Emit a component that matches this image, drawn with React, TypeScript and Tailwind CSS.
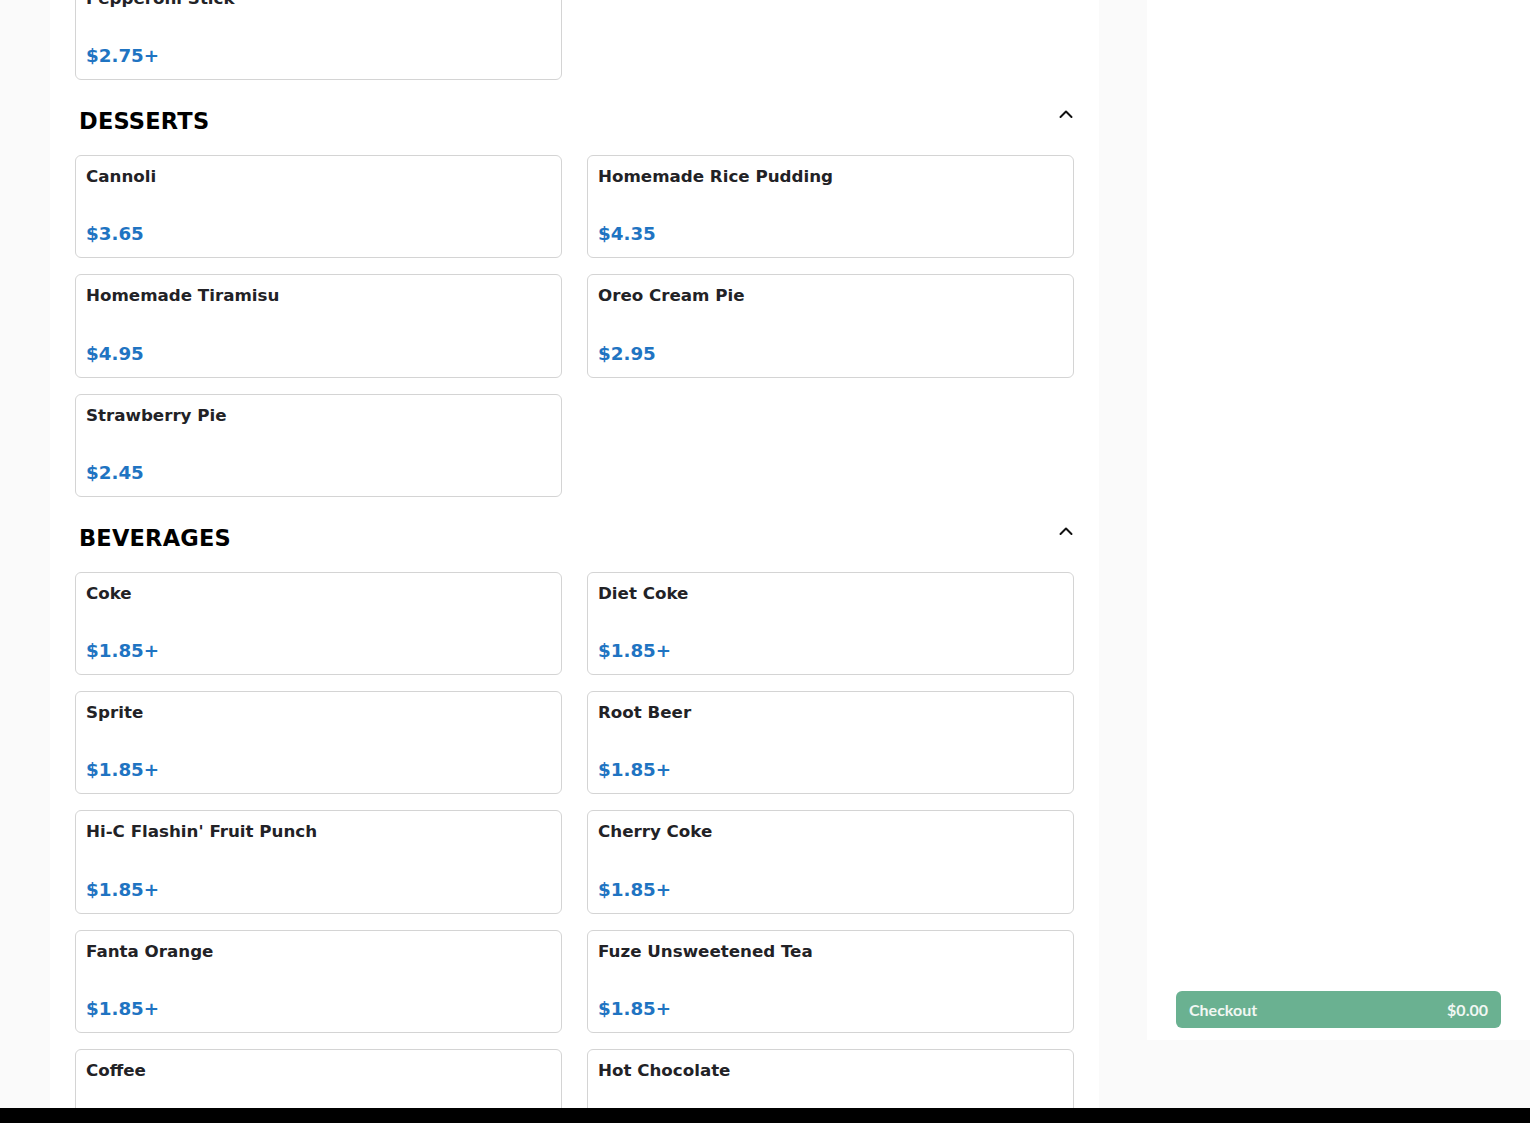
import React from "react";

type Item = { name: string; price: string };

const desserts: Item[] = [
  { name: "Cannoli", price: "$3.65" },
  { name: "Homemade Rice Pudding", price: "$4.35" },
  { name: "Homemade Tiramisu", price: "$4.95" },
  { name: "Oreo Cream Pie", price: "$2.95" },
  { name: "Strawberry Pie", price: "$2.45" },
];

const beverages: Item[] = [
  { name: "Coke", price: "$1.85+" },
  { name: "Diet Coke", price: "$1.85+" },
  { name: "Sprite", price: "$1.85+" },
  { name: "Root Beer", price: "$1.85+" },
  { name: "Hi-C Flashin' Fruit Punch", price: "$1.85+" },
  { name: "Cherry Coke", price: "$1.85+" },
  { name: "Fanta Orange", price: "$1.85+" },
  { name: "Fuze Unsweetened Tea", price: "$1.85+" },
  { name: "Coffee", price: "$1.85+" },
  { name: "Hot Chocolate", price: "$1.85+" },
];

function ItemCard({ item }: { item: Item }) {
  return (
    <button className="h-[103.3px] rounded-[6px] border border-[#d4d4d4] bg-white px-[10px] pt-[8px] pb-[10px] flex flex-col justify-between items-start text-left">
      <span className="text-[16.7px] leading-[24px] font-bold text-[#222226]">{item.name}</span>
      <span className="text-[18.3px] leading-[26px] font-bold text-[#1f74c2]">{item.price}</span>
    </button>
  );
}

function Grid({ items }: { items: Item[] }) {
  return (
    <div className="grid grid-cols-2 gap-x-[25px] gap-y-[16px]">
      {items.map((it) => (
        <ItemCard key={it.name} item={it} />
      ))}
    </div>
  );
}

function SectionHeader({ title }: { title: string }) {
  return (
    <div className="h-[75px] flex justify-between items-start pl-[4px] pr-[1px] pt-[27px]">
      <h2 className="text-[22.5px] leading-[28px] font-bold text-black tracking-[0.2px]">{title}</h2>
      <svg width="14" height="14" viewBox="0 0 14 14" className="mt-0" fill="none">
        <path d="M1.5 10 L7 4.5 L12.5 10" stroke="#111" strokeWidth="2" strokeLinecap="round" strokeLinejoin="round" />
      </svg>
    </div>
  );
}

export default function App() {
  return (
    <div
      className="w-[1530px] h-[1123px] overflow-hidden bg-[#fafafa] flex flex-col"
      style={{ fontFamily: '"DejaVu Sans", sans-serif' }}
    >
      <div className="flex-1 flex overflow-hidden">
        <div className="w-[50px] shrink-0" />

        {/* Menu column */}
        <main className="w-[1049px] shrink-0 bg-white px-[25px] overflow-hidden">
          <div className="-mt-[23.3px]">
            <Grid items={[{ name: "Pepperoni Stick", price: "$2.75+" }]} />
            <SectionHeader title="DESSERTS" />
            <Grid items={desserts} />
            <SectionHeader title="BEVERAGES" />
            <Grid items={beverages} />
          </div>
        </main>

        <div className="w-[48px] shrink-0" />

        {/* Cart sidebar */}
        <aside className="flex-1 h-[1040px] bg-white px-[29px] pb-[12px] flex flex-col justify-end">
          <button
            className="h-[37px] w-full rounded-[6px] bg-[#6ab191] px-[13px] flex items-center justify-between text-[16px] font-bold text-[#f1f7f3]"
            style={{ fontFamily: "Lato, sans-serif" }}
          >
            <span>Checkout</span>
            <span>$0.00</span>
          </button>
        </aside>
      </div>
      <div className="h-[15px] bg-black shrink-0" />
    </div>
  );
}
